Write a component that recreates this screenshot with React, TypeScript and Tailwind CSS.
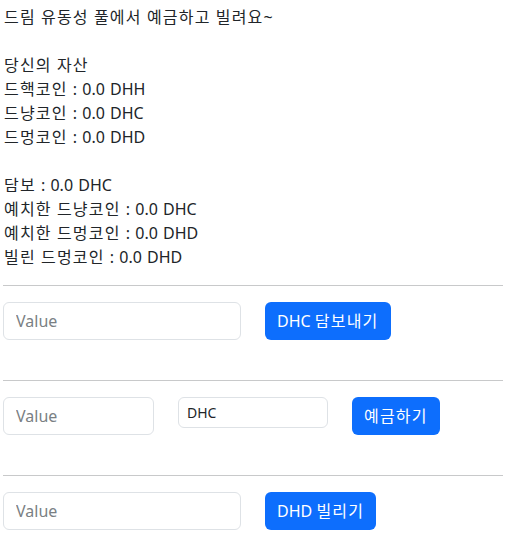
// Hangul runs get a little extra tracking so widths line up with the reference
function T({ t }: { t: string }) {
  return (
    <>
      {t.split(/([가-힣]+)/).map((part, i) =>
        /[가-힣]/.test(part) ? (
          <span key={i} className="tracking-[1.2px]">
            {part}
          </span>
        ) : (
          <span key={i}>{part}</span>
        )
      )}
    </>
  );
}

const lines1 = ['당신의 자산', '드핵코인 : 0.0 DHH', '드냥코인 : 0.0 DHC', '드멍코인 : 0.0 DHD'];
const lines2 = ['담보 : 0.0 DHC', '예치한 드냥코인 : 0.0 DHC', '예치한 드멍코인 : 0.0 DHD', '빌린 드멍코인 : 0.0 DHD'];

export default function App() {
  return (
    <div className="min-h-screen bg-white pl-[3px] pt-[5px] text-[16px] leading-6 text-[#212529] [word-spacing:1px] font-['Noto_Sans','Noto_Sans_CJK_KR',sans-serif]">
      <div className="pl-px">
        <div>
          <T t="드림 유동성 풀에서 예금하고 빌려요~" />
        </div>
        <div className="h-6" />
        {lines1.map((l) => (
          <div key={l}>
            <T t={l} />
          </div>
        ))}
        <div className="h-6" />
        {lines2.map((l) => (
          <div key={l}>
            <T t={l} />
          </div>
        ))}
      </div>

      <hr className="my-4 w-[500px] border-t border-[#c8c9ca]" />
      <div className="flex items-start gap-6">
        <input
          placeholder="Value"
          className="h-[38px] w-[238px] rounded-md border border-[#dee2e6] px-3 text-[16px] placeholder:text-[#7a7f84] outline-none"
        />
        <button className="h-[38px] rounded-md bg-[#0d6efd] px-3 text-[16px] text-white">
          <T t="DHC 담보내기" />
        </button>
      </div>
      <div className="h-6" />

      <hr className="my-4 w-[500px] border-t border-[#c8c9ca]" />
      <div className="flex items-start gap-6">
        <input
          placeholder="Value"
          className="h-[38px] w-[151px] rounded-md border border-[#dee2e6] px-3 text-[16px] placeholder:text-[#7a7f84] outline-none"
        />
        <input
          defaultValue="DHC"
          className="h-[31px] w-[150px] rounded-md border border-[#dee2e6] px-2 text-[14px] text-[#212529] outline-none"
        />
        <button className="h-[38px] rounded-md bg-[#0d6efd] px-3 text-[16px] text-white">
          <T t="예금하기" />
        </button>
      </div>
      <div className="h-6" />

      <hr className="my-4 w-[500px] border-t border-[#c8c9ca]" />
      <div className="flex items-start gap-6">
        <input
          placeholder="Value"
          className="h-[38px] w-[238px] rounded-md border border-[#dee2e6] px-3 text-[16px] placeholder:text-[#7a7f84] outline-none"
        />
        <button className="h-[38px] rounded-md bg-[#0d6efd] px-3 text-[16px] text-white">
          <T t="DHD 빌리기" />
        </button>
      </div>
    </div>
  );
}
